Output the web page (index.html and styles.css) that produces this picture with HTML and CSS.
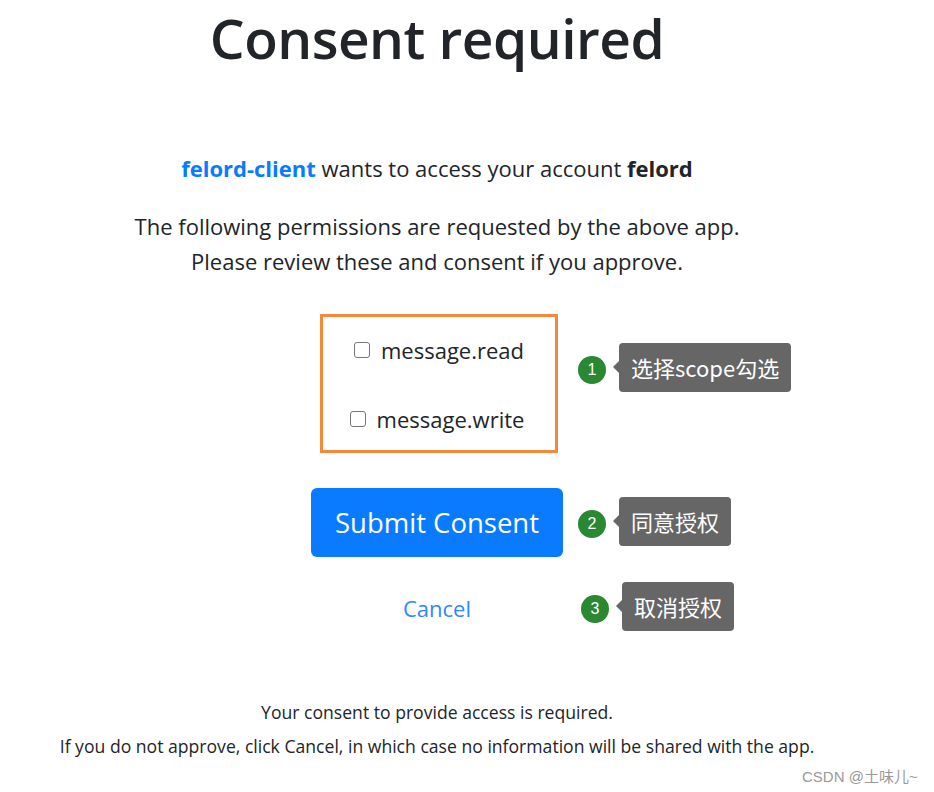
FILE: index.html
```html
<!DOCTYPE html>
<html lang="en">
<head>
<meta charset="utf-8">
<title>Consent required</title>
<link rel="stylesheet" href="styles.css">
</head>
<body>
<div class="page">
  <h1 class="title">Consent required</h1>
  <p class="lead"><span class="client">felord-client</span> wants to access your account <b>felord</b></p>
  <p class="info">The following permissions are requested by the above app.<br>Please review these and consent if you approve.</p>
  <div class="scopes">
    <label class="scope scope-read"><span class="box"></span>message.read</label>
    <label class="scope scope-write"><span class="box"></span>message.write</label>
  </div>
  <button class="submit">Submit Consent</button>
  <a class="cancel" href="#">Cancel</a>
  <p class="foot">Your consent to provide access is required.</p>
  <p class="foot foot2">If you do not approve, click Cancel, in which case no information will be shared with the app.</p>

  <div class="note note1"><span class="num">1</span><span class="tip">选择scope勾选</span></div>
  <div class="note note2"><span class="num">2</span><span class="tip">同意授权</span></div>
  <div class="note note3"><span class="num">3</span><span class="tip">取消授权</span></div>
  <div class="mark">CSDN @土味儿~</div>
</div>
</body>
</html>
```
FILE: styles.css
```css
html, body { margin: 0; padding: 0; background: #fff; }
body { font-family: "Open Sans", "Noto Sans CJK SC", sans-serif; color: #212529; }
.page { position: relative; width: 874px; height: 792px; padding-right: 60px; display: flex; flex-direction: column; align-items: center; }
.title { margin: 0; font-size: 55px; font-weight: 600; line-height: 75px; letter-spacing: -0.5px; }
.lead { margin: 78px 0 0; font-size: 22px; line-height: 30px; }
.lead b { font-weight: 700; }
.client { color: #0a7bff; font-weight: 700; }
.info { margin: 26px 0 0; font-size: 22px; line-height: 35px; text-align: center; }
.scopes { margin: 35px 0 0 4px; width: 232px; height: 133px; border: 3px solid #f5883b; display: flex; flex-direction: column; align-items: center; }
.scope { display: flex; align-items: center; font-size: 22px; line-height: 26px; }
.scope-read { margin-top: 20px; }
.scope-write { margin-top: 43px; padding-right: 4px; }
.box { width: 14px; height: 14px; border: 1.5px solid #767676; border-radius: 3px; margin-right: 11px; }
.submit { margin-top: 35px; width: 252px; height: 69px; border: 0; border-radius: 6px; background: #0a7bff; color: #fff; font-family: "Open Sans", sans-serif; font-size: 27.5px; }
.cancel { margin-top: 36px; font-size: 22px; line-height: 30px; color: #2f87ff; text-decoration: none; }
.foot { margin: 77px 0 0; font-size: 17.6px; line-height: 24px; }
.foot2 { margin-top: 10px; }
.note { position: absolute; display: flex; align-items: center; }
.note1 { left: 578px; top: 343px; }
.note2 { left: 578px; top: 497px; }
.note3 { left: 581px; top: 582px; }
.num { width: 28px; height: 28px; margin-top: 4px; border-radius: 50%; background: #2a8833; color: #fff; font-size: 16px; display: flex; align-items: center; justify-content: center; font-family: "Liberation Sans", sans-serif; }
.tip { position: relative; margin-left: 13px; height: 49px; padding: 0 12px; background: #666; color: #fff; border-radius: 4px; font-size: 22px; line-height: 49px; font-family: "Noto Sans CJK SC", sans-serif; }
.tip::before { content: ""; position: absolute; left: -6px; top: 18px; border-style: solid; border-width: 6px 6px 6px 0; border-color: transparent #666 transparent transparent; }
.mark { position: absolute; left: 802px; top: 765px; font-size: 15px; color: #999; font-family: "Liberation Sans", "Noto Sans CJK SC", sans-serif; }
```
